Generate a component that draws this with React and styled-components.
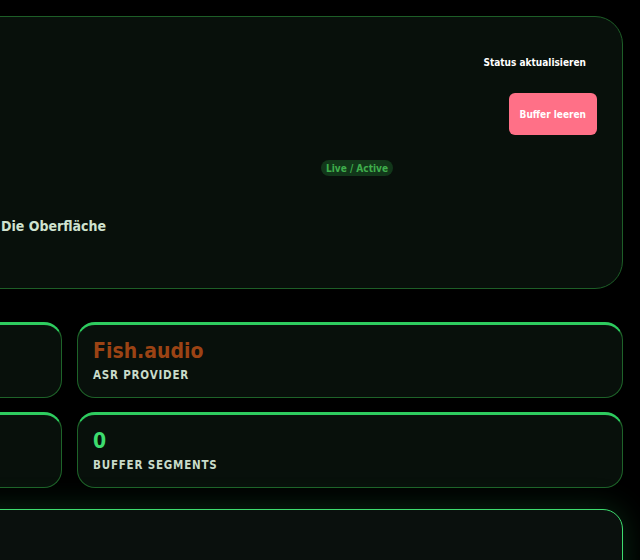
import React from "react";
import styled, { createGlobalStyle } from "styled-components";

const GlobalStyle = createGlobalStyle`
  html, body {
    margin: 0;
    padding: 0;
    background: #000;
    overflow: hidden;
  }
  body {
    font-family: "DejaVu Sans Condensed", "DejaVu Sans", sans-serif;
    color: #e6efe6;
  }
`;

const Shell = styled.main`
  width: 1107px;
  margin: 16px 0 0 -484px;
  display: flex;
  flex-direction: column;
`;

const ControlCard = styled.section`
  display: flex;
  flex-direction: column;
  padding: 24px 25px 53px 484px;
  background: #08100b;
  border: 1px solid #1d5e27;
  border-radius: 28px;
`;

const Actions = styled.div`
  align-self: flex-end;
  display: flex;
  flex-direction: column;
  align-items: flex-end;
  gap: 10px;
`;

const Button = styled.button`
  height: 42px;
  padding: 0 11px;
  border: none;
  border-radius: 6px;
  font-family: "DejaVu Sans Condensed", "DejaVu Sans", sans-serif;
  font-weight: 700;
  font-size: 10px;
  color: #ffffff;
  background: ${(p) => (p.$danger ? "#ff7087" : "transparent")};
  cursor: pointer;
`;

const BadgeRow = styled.div`
  display: flex;
  justify-content: flex-end;
  padding-right: 204px;
  margin-top: 25px;
`;

const Badge = styled.span`
  display: inline-flex;
  align-items: center;
  height: 16px;
  padding: 0 5px;
  border-radius: 8px;
  background: #12371a;
  color: #3fae4c;
  font-size: 10px;
  font-weight: 700;
`;

const Title = styled.h2`
  margin: 41px 0 0;
  font-size: 14px;
  line-height: 18px;
  font-weight: 700;
  color: #cfe2cf;
`;

const StatGrid = styled.div`
  display: grid;
  grid-template-columns: 546px 546px;
  gap: 14px 15px;
  margin-top: 33px;
`;

const StatCard = styled.div`
  display: flex;
  flex-direction: column;
  height: 76px;
  box-sizing: border-box;
  padding: 14px 15px 0;
  background: #08100b;
  border: 1px solid #1e6329;
  border-top: 3px solid #2ecc5f;
  border-radius: 18px;
`;

const StatValue = styled.div`
  font-size: 21px;
  line-height: 25px;
  font-weight: 700;
  color: ${(p) => p.$tone};
`;

const StatLabel = styled.div`
  margin-top: 5px;
  font-size: 11.5px;
  line-height: 13px;
  font-weight: 700;
  letter-spacing: 0.8px;
  color: #c9dbc9;
`;

const LogPanel = styled.section`
  margin-top: 21px;
  height: 200px;
  background: #0a100d;
  border: 1px solid #3ddc6e;
  border-radius: 20px;
  box-shadow: 0 0 32px rgba(40, 190, 90, 0.22);
`;

const stats = [
  { id: "session" },
  { id: "asr", value: "Fish.audio", label: "ASR PROVIDER", tone: "#9b4314" },
  { id: "stream" },
  { id: "buffer", value: "0", label: "BUFFER SEGMENTS", tone: "#3ddc6e" },
];

export default function App() {
  return (
    <>
      <GlobalStyle />
      <Shell>
        <ControlCard>
          <Actions>
            <Button>Status aktualisieren</Button>
            <Button $danger>Buffer leeren</Button>
          </Actions>
          <BadgeRow>
            <Badge>Live / Active</Badge>
          </BadgeRow>
          <Title>Die Oberfläche</Title>
        </ControlCard>
        <StatGrid>
          {stats.map((s) => (
            <StatCard key={s.id}>
              {s.value && <StatValue $tone={s.tone}>{s.value}</StatValue>}
              {s.label && <StatLabel>{s.label}</StatLabel>}
            </StatCard>
          ))}
        </StatGrid>
        <LogPanel />
      </Shell>
    </>
  );
}
